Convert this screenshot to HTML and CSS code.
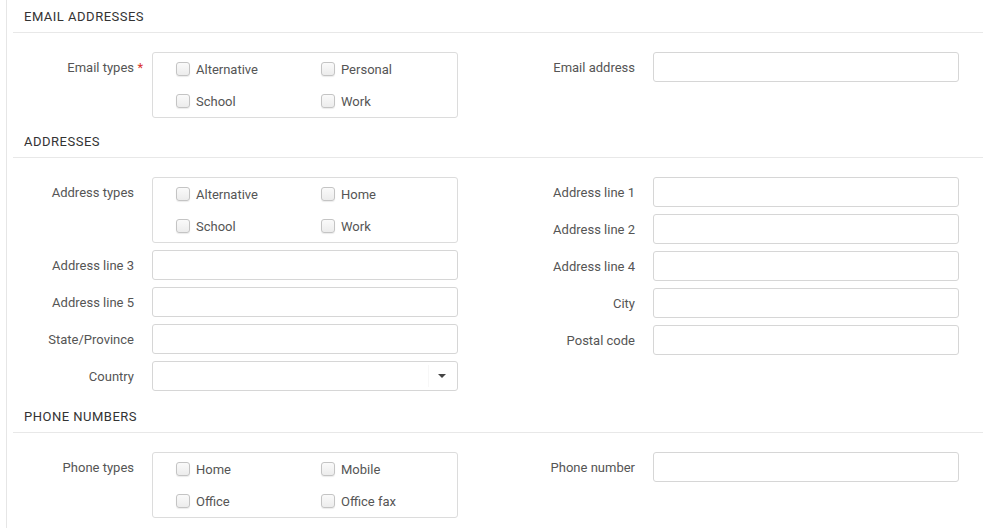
FILE: index.html
```html
<!DOCTYPE html>
<html lang="en">
<head>
    <meta charset="UTF-8">
    <meta name="viewport" content="width=device-width, initial-scale=1.0">
    <title>Contact details</title>
    <link rel="stylesheet" href="styles.css">
</head>
<body>
    <div class="page">
        <div class="section">
            <div class="section-title">Email addresses</div>
            <div class="section-body">
                <div class="col">
                    <div class="field">
                        <label class="field-label required">Email types</label>
                        <div class="check-box">
                            <label class="check"><span class="tick"></span>Alternative</label>
                            <label class="check"><span class="tick"></span>Personal</label>
                            <label class="check"><span class="tick"></span>School</label>
                            <label class="check"><span class="tick"></span>Work</label>
                        </div>
                    </div>
                </div>
                <div class="col">
                    <div class="field">
                        <label class="field-label">Email address</label>
                        <input class="input" type="text">
                    </div>
                </div>
            </div>
        </div>

        <div class="section">
            <div class="section-title">Addresses</div>
            <div class="section-body">
                <div class="col">
                    <div class="field">
                        <label class="field-label">Address types</label>
                        <div class="check-box">
                            <label class="check"><span class="tick"></span>Alternative</label>
                            <label class="check"><span class="tick"></span>Home</label>
                            <label class="check"><span class="tick"></span>School</label>
                            <label class="check"><span class="tick"></span>Work</label>
                        </div>
                    </div>
                    <div class="field">
                        <label class="field-label">Address line 3</label>
                        <input class="input" type="text">
                    </div>
                    <div class="field">
                        <label class="field-label">Address line 5</label>
                        <input class="input" type="text">
                    </div>
                    <div class="field">
                        <label class="field-label">State/Province</label>
                        <input class="input" type="text">
                    </div>
                    <div class="field field-last">
                        <label class="field-label">Country</label>
                        <div class="select">
                            <span class="select-arrow"></span>
                        </div>
                    </div>
                </div>
                <div class="col">
                    <div class="field">
                        <label class="field-label">Address line 1</label>
                        <input class="input" type="text">
                    </div>
                    <div class="field">
                        <label class="field-label">Address line 2</label>
                        <input class="input" type="text">
                    </div>
                    <div class="field">
                        <label class="field-label">Address line 4</label>
                        <input class="input" type="text">
                    </div>
                    <div class="field">
                        <label class="field-label">City</label>
                        <input class="input" type="text">
                    </div>
                    <div class="field">
                        <label class="field-label">Postal code</label>
                        <input class="input" type="text">
                    </div>
                </div>
            </div>
        </div>

        <div class="section">
            <div class="section-title">Phone numbers</div>
            <div class="section-body">
                <div class="col">
                    <div class="field">
                        <label class="field-label">Phone types</label>
                        <div class="check-box">
                            <label class="check"><span class="tick"></span>Home</label>
                            <label class="check"><span class="tick"></span>Mobile</label>
                            <label class="check"><span class="tick"></span>Office</label>
                            <label class="check"><span class="tick"></span>Office fax</label>
                        </div>
                    </div>
                </div>
                <div class="col">
                    <div class="field">
                        <label class="field-label">Phone number</label>
                        <input class="input" type="text">
                    </div>
                </div>
            </div>
        </div>
    </div>
</body>
</html>
```

FILE: styles.css
```css
html, body { margin: 0; padding: 0; background: #fff; }
body { font-family: Roboto, "Liberation Sans", sans-serif; font-size: 13px; color: #555; overflow: hidden; height: 528px; }

.page { margin-left: 6px; padding-left: 6px; border-left: 1px solid #e6e6e6; width: 970px; min-height: 528px; }

.section-title { height: 33px; box-sizing: border-box; padding: 8px 0 0 11px; line-height: 18px; letter-spacing: 0.5px; text-transform: uppercase; color: #333; border-bottom: 1px solid #e8e8e8; }
.section-body { display: flex; gap: 56px; padding: 19px 0 0 0; }
.col { display: flex; flex-direction: column; }

.field { display: grid; grid-template-columns: 121px 306px; column-gap: 18px; margin-bottom: 7px; }
.field-last { margin-bottom: 9px; }
.field-label { text-align: right; height: 30px; line-height: 30px; padding-top: 1px; box-sizing: border-box; position: relative; color: #555; }
.field-label.required::after { content: "*"; color: #d9342b; position: absolute; right: -9px; top: 1px; }

.input { height: 30px; box-sizing: border-box; border: 1px solid #d6d6d6; border-radius: 3px; margin: 0; padding: 0 8px; font: inherit; background: #fff; }

.select { height: 30px; box-sizing: border-box; border: 1px solid #d6d6d6; border-radius: 3px; position: relative; background: #fff; }
.select::before { content: ""; position: absolute; right: 28px; top: 3px; bottom: 3px; width: 1px; background: #f7f7f7; }
.select-arrow { position: absolute; right: 11px; top: 12px; width: 0; height: 0; border-left: 4px solid transparent; border-right: 4px solid transparent; border-top: 4px solid #444; }

.check-box { display: grid; grid-template-columns: 145px 145px; border: 1px solid #dcdcdc; border-radius: 3px; padding: 0 0 0 23px; height: 66px; box-sizing: border-box; }
.check { display: flex; align-items: center; height: 32px; color: #555; }
.tick { width: 14px; height: 14px; box-sizing: border-box; border: 1px solid #c4c4c4; border-radius: 3px; background: linear-gradient(#fafafa, #ececec); box-shadow: 0 1px 1px rgba(0,0,0,0.08); margin-right: 6px; }
```
